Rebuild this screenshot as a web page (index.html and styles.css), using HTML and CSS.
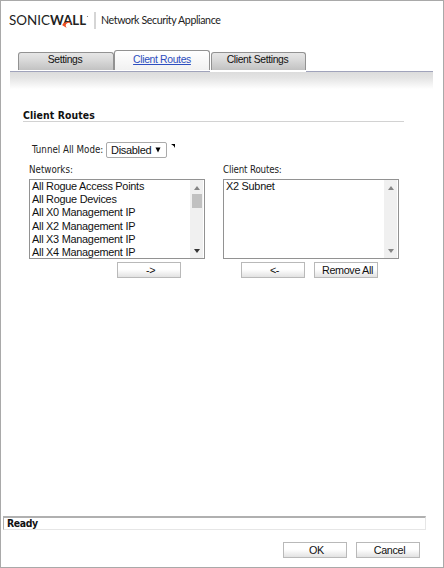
FILE: index.html
```
<!DOCTYPE html>
<html lang="en">
<head>
<meta charset="utf-8">
<title>Client Routes</title>
<link rel="stylesheet" href="styles.css">
</head>
<body>
<div class="window">
  <header class="brand">
    <svg class="logo" width="82" height="20" viewBox="0 0 82 20">
      <text class="logo-light" x="0" y="13" textLength="41" lengthAdjust="spacingAndGlyphs">SONIC</text>
      <text class="logo-bold" x="41" y="13" textLength="36" lengthAdjust="spacingAndGlyphs">WALL</text>
      <path d="M62.3 11.5C61.5 8.6 56.5 9.6 53.8 12L53.3 13.2L57.8 16C55.7 13.2 57 10.8 60.4 10.8Z" fill="#f04e23"/>
      <circle cx="78.5" cy="4.5" r=".6" fill="#777"/>
    </svg>
    <span class="divider"></span>
    <span class="product">Network Security Appliance</span>
  </header>
  <nav class="tabs">
    <a class="tab">Settings</a>
    <a class="tab active">Client Routes</a>
    <a class="tab last">Client Settings</a>
  </nav>
  <div class="tab-shade"></div>
  <main>
    <h1>Client Routes</h1>
    <div class="mode-row">
      <span class="label mode-label">Tunnel All Mode:</span>
      <div class="select"><span>Disabled</span><svg width="6" height="6" viewBox="0 0 6 6"><path d="M.5 .5H5.5L3 5.5Z"/></svg></div>
      <svg class="tip" width="4" height="4" viewBox="0 0 4 4"><path d="M0 0H4V4L2.8 2Z"/></svg>
    </div>
    <div class="lists">
      <section>
        <div class="label">Networks:</div>
        <div class="listbox">
          <ul>
            <li>All Rogue Access Points</li>
            <li>All Rogue Devices</li>
            <li>All X0 Management IP</li>
            <li>All X2 Management IP</li>
            <li>All X3 Management IP</li>
            <li>All X4 Management IP</li>
          </ul>
          <div class="scroll">
            <svg width="6" height="4" viewBox="0 0 6 4"><path d="M0 4L3 0L6 4Z" fill="#858585"/></svg>
            <span class="thumb"></span>
            <svg width="6" height="4" viewBox="0 0 6 4"><path d="M0 0H6L3 4Z" fill="#333"/></svg>
          </div>
        </div>
        <div class="actions add"><span class="button">-&gt;</span></div>
      </section>
      <section>
        <div class="label">Client Routes:</div>
        <div class="listbox">
          <ul><li>X2 Subnet</li></ul>
          <div class="scroll">
            <svg width="6" height="4" viewBox="0 0 6 4"><path d="M0 4L3 0L6 4Z" fill="#858585"/></svg>
            <svg width="6" height="4" viewBox="0 0 6 4"><path d="M0 0H6L3 4Z" fill="#858585"/></svg>
          </div>
        </div>
        <div class="actions remove"><span class="button">&lt;-</span><span class="button wide">Remove All</span></div>
      </section>
    </div>
  </main>
  <div class="status">Ready</div>
  <footer><span class="button">OK</span><span class="button">Cancel</span></footer>
</div>
</body>
</html>
```
FILE: styles.css
```
* { box-sizing: border-box; }
body { margin: 0; background: #fff; color: #111; font-family: "Liberation Sans", sans-serif; font-size: 11px; }
svg { display: block; flex: none; }
.window { width: 444px; height: 568px; border: 1px solid #a9a9a9; display: flex; flex-direction: column; }
.brand { height: 49px; padding: 11px 0 0 8px; display: flex; }
.logo-light, .logo-bold { font-family: Lato, sans-serif; font-size: 12.5px; fill: #222; }
.logo-light { font-weight: 400; }
.logo-bold { font-weight: 700; }
.divider { width: 2px; height: 17px; background: #d5d5d5; margin: 0 5px 0 3px; }
.product { font: 10.6px/16px Lato, sans-serif; color: #222; white-space: nowrap; letter-spacing: -.38px; }
.tabs { height: 22px; padding-left: 17px; display: flex; align-items: flex-start; position: relative; }
.tabs::before, .tabs::after { content: ""; position: absolute; top: 21px; height: 1px; background: #a0a3bb; }
.tabs::before { left: 9px; width: 200px; }
.tabs::after { left: 305px; width: 127px; }
.tab { width: 96px; height: 18px; margin-top: 2px; padding-right: 2px; border: 1px solid #929292; border-bottom: 0; border-radius: 3px 3px 0 0; background: linear-gradient(#e6e6e6, #d8d8d8 45%, #c2c2c2); text-align: center; line-height: 13px; font-size: 10.4px; letter-spacing: -.35px; }
.tab.active { height: 20px; margin-top: 0; padding-right: 0; line-height: 17px; background: linear-gradient(#fff, #f1f1f1); color: #2d4ec0; text-decoration: underline; }
.tab.last { margin-left: 1px; width: 95px; }
.tab-shade { height: 17px; margin: 0 10px 0 9px; background: linear-gradient(#dcdcdc, #e4e4e4 35%, #fff); }
main { height: 427px; padding-top: 19px; }
h1 { margin: 0 39px 0 22px; height: 14px; border-bottom: 1px solid #d2d2d2; font: bold 10.4px/14px "DejaVu Sans Condensed", "DejaVu Sans", sans-serif; letter-spacing: .1px; }
.label { font: 10px/14px "DejaVu Sans Condensed", "DejaVu Sans", sans-serif; white-space: nowrap; color: #222; }
.mode-row { height: 16px; margin: 20px 0 0 31px; display: flex; align-items: center; }
.mode-label { width: 74px; font-size: 9.7px; }
.select { width: 61px; height: 16px; border: 1px solid #aaa; border-radius: 2px; padding: 0 5px 0 4px; display: flex; align-items: center; justify-content: space-between; font-size: 11px; letter-spacing: -.3px; }
.tip { align-self: flex-start; margin: 2px 0 0 4px; }
.lists { display: flex; gap: 18px; margin: 5px 0 0 28px; }
section { width: 176px; }
section > .label { height: 16px; font-size: 9.7px; }
section + section > .label { letter-spacing: -.15px; }
.listbox { height: 80px; border: 1px solid #929292; display: flex; justify-content: space-between; }
ul { list-style: none; margin: 0; padding: 0 0 0 2px; font-size: 10.9px; line-height: 13.2px; letter-spacing: -.26px; }
.scroll { width: 13px; margin-right: 1px; background: #f0f0f0; display: flex; flex-direction: column; align-items: center; justify-content: space-between; padding: 6px 0 5px; }
.thumb { width: 10px; height: 14px; background: #c1c1c1; margin: 4px 0 auto; }
.actions { display: flex; gap: 9px; margin-top: 3px; }
.add { padding-left: 88px; }
.remove { padding-left: 18px; }
.button { width: 64px; height: 16px; flex: none; border: 1px solid #b9b9b9; background: linear-gradient(#fff 45%, #e2e2e2); text-align: center; font-size: 10.8px; line-height: 14px; white-space: nowrap; padding-left: 3px; letter-spacing: -.35px; }
.status { height: 14px; margin: 0 17px 0 2px; border: 1px solid #e6e6e6; border-top: 2px solid #b0b0b0; border-left-color: #b0b0b0; padding-left: 3px; font: bold 10.4px/10px "DejaVu Sans Condensed", "DejaVu Sans", sans-serif; letter-spacing: -.4px; }
footer { display: flex; gap: 9px; margin: 12px 0 0 282px; }
```
